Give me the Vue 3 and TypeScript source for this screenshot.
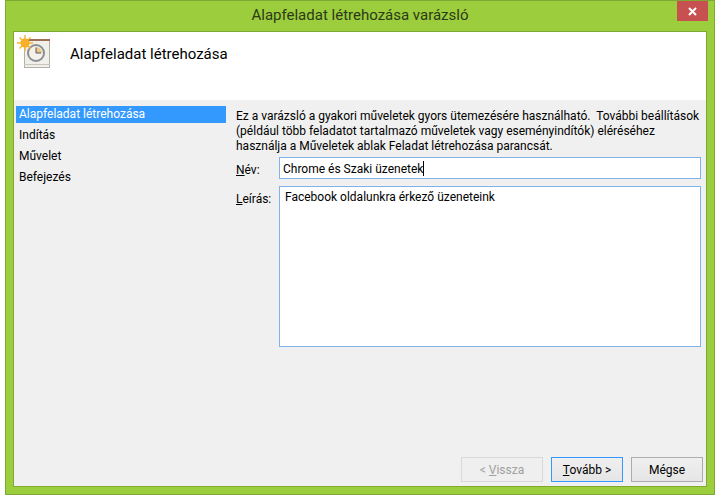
<script setup lang="ts">
const steps: string[] = ['Alapfeladat létrehozása', 'Indítás', 'Művelet', 'Befejezés']
</script>

<template>
  <div class="win">
    <div class="titlebar">
      <span class="title">Alapfeladat létrehozása varázsló</span>
      <button class="close" aria-label="Bezárás">
        <svg width="9" height="9" viewBox="0 0 9 9"><path d="M1 1 L8 8 M8 1 L1 8" stroke="#fff" stroke-width="2" /></svg>
      </button>
    </div>
    <div class="client">
      <header class="head">
        <svg class="hicon" width="34" height="34" viewBox="0 0 34 34">
          <rect x="7.5" y="4.5" width="25" height="28" fill="#f1efe9" stroke="#b5b0a6" />
          <rect x="7" y="29" width="26" height="1" fill="#c9c5bc" />
          <rect x="9" y="4" width="24" height="2" fill="#9c6f55" />
          <circle cx="19" cy="18" r="8" fill="#f4f2ea" stroke="#8a8f94" stroke-width="2" />
          <path d="M19 12 A6 6 0 0 1 25 18 H19 Z" fill="#ecc98a" />
          <path d="M19 12.5 V18 H24" fill="none" stroke="#55585c" stroke-width="1" />
          <circle cx="8" cy="8" r="4.5" fill="#f6a81c" />
          <path d="M8 0 V16 M0 8 H16 M2.5 2.5 L13.5 13.5 M13.5 2.5 L2.5 13.5" stroke="#f9b32b" stroke-width="1.4" />
        </svg>
        <h1 class="htitle">Alapfeladat létrehozása</h1>
      </header>
      <div class="body">
        <nav class="steps">
          <div v-for="(s, i) in steps" :key="s" class="step" :class="{ active: i === 0 }">{{ s }}</div>
        </nav>
        <main class="content">
          <p class="desc">Ez a varázsló a gyakori műveletek gyors ütemezésére használható.&nbsp; További beállítások (például több feladatot tartalmazó műveletek vagy eseményindítók) eléréséhez használja a Műveletek ablak Feladat létrehozása parancsát.</p>
          <div class="row name">
            <label class="lab"><u>N</u>év:</label>
            <div class="field single">Chrome és Szaki üzenetek<span class="caret"></span></div>
          </div>
          <div class="row">
            <label class="lab"><u>L</u>eírás:</label>
            <div class="field multi">Facebook oldalunkra érkező üzeneteink</div>
          </div>
        </main>
      </div>
      <footer class="foot">
        <button class="btn disabled">&lt; <u>V</u>issza</button>
        <button class="btn primary"><u>T</u>ovább &gt;</button>
        <button class="btn cancel">Mégse</button>
      </footer>
    </div>
  </div>
</template>

<style>
html, body { margin: 0; background: #fff; }
</style>

<style scoped>
.win {
  box-sizing: border-box;
  width: 710px;
  height: 495px;
  margin-left: 5px;
  background: #9ccd3c;
  border: 1px solid #7ea832;
  padding: 0 7px 7px;
  display: flex;
  flex-direction: column;
  font-family: "Roboto", "Open Sans", sans-serif;
  font-size: 12px;
  color: #000;
}
.titlebar {
  height: 30px;
  flex: none;
  display: flex;
  align-items: center;
  justify-content: center;
  position: relative;
}
.title { font-size: 15px; color: #2b3a1a; margin-top: -2px; }
.close {
  position: absolute;
  right: -1px;
  top: 0;
  width: 31px;
  height: 20px;
  border: 0;
  padding: 0;
  background: #c75050;
  display: flex;
  align-items: center;
  justify-content: center;
}
.client {
  flex: 1;
  min-height: 0;
  display: flex;
  flex-direction: column;
  background: #f0f0f0;
  border: 1px solid #7ea832;
}
.head {
  height: 68px;
  flex: none;
  background: #fff;
  display: flex;
  align-items: flex-start;
  padding: 3px 0 0 3px;
  gap: 19px;
  box-sizing: border-box;
}
.hicon { flex: none; }
.htitle { margin: 10px 0 0; font-size: 15px; font-weight: 400; }
.body { flex: 1; min-height: 0; display: flex; padding-top: 6px; }
.steps { width: 210px; margin-left: 2px; flex: none; }
.step { height: 17px; line-height: 17px; padding-left: 3px; margin-bottom: 4px; font-size: 12px; }
.step.active { background: #3399ff; color: #fff; }
.content { margin-left: 10px; width: 468px; }
.desc { margin: 0; line-height: 15px; width: 470px; padding-top: 3px; }
.row { display: flex; align-items: flex-start; margin-top: 7px; }
.row.name { margin-top: 3px; }
.lab { width: 43px; flex: none; padding-top: 6px; }
.field { box-sizing: border-box; background: #fff; border: 1px solid #7eb4ea; width: 422px; }
.single { height: 22px; line-height: 22px; padding-left: 3px; }
.multi { height: 161px; padding: 3px 5px; }
.caret { display: inline-block; width: 1px; height: 15px; background: #000; vertical-align: -3px; }
.foot {
  flex: none;
  height: 32px;
  display: flex;
  justify-content: flex-end;
  gap: 8px;
  padding: 3px 3px 0 0;
  box-sizing: border-box;
}
.btn {
  box-sizing: border-box;
  width: 72px;
  height: 25px;
  font: inherit;
  padding: 0;
  border: 1px solid #acacac;
  background: linear-gradient(#f0f0f0, #e5e5e5);
  color: #000;
}
.btn.primary { border-color: #3399ff; }
.btn.disabled { width: 82px; border-color: #d9d9d9; background: #efefef; color: #a0a0a0; }
</style>
